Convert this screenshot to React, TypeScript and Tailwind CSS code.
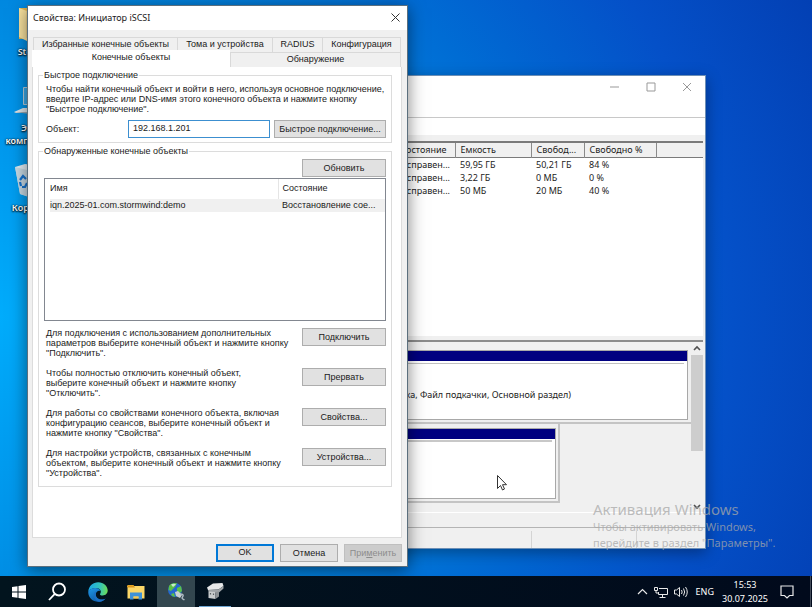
import type { ReactNode } from 'react';

const UI = "font-['Noto_Sans','Open_Sans',sans-serif]";
const DIALOG_UI = "font-['Liberation_Sans',Arial,sans-serif]";

interface Action {
  label: string;
  text: string[];
}

const actions: Action[] = [
  {
    label: 'Подключить',
    text: ['Для подключения с использованием дополнительных', 'параметров выберите конечный объект и нажмите кнопку', '"Подключить".'],
  },
  {
    label: 'Прервать',
    text: ['Чтобы полностью отключить конечный объект,', 'выберите конечный объект и нажмите кнопку', '"Отключить".'],
  },
  {
    label: 'Свойства...',
    text: ['Для работы со свойствами конечного объекта, включая', 'конфигурацию сеансов, выберите конечный объект и', 'нажмите кнопку "Свойства".'],
  },
  {
    label: 'Устройства...',
    text: ['Для настройки устройств, связанных с конечным', 'объектом, выберите конечный объект и нажмите кнопку', '"Устройства".'],
  },
];

const volumes = [
  ['Исправен...', '59,95 ГБ', '50,21 ГБ', '84 %'],
  ['Исправен...', '3,22 ГБ', '0 МБ', '0 %'],
  ['Исправен...', '50 МБ', '20 МБ', '40 %'],
];

function Lines({ lines }: { lines: string[] }) {
  return (
    <p className="leading-[10px] whitespace-nowrap">
      {lines.map((line) => (
        <span key={line} className="block">
          {line}
        </span>
      ))}
    </p>
  );
}

function DialogButton({ children, className = 'w-[84px]' }: { children: ReactNode; className?: string }) {
  return (
    <button type="button" className={`h-[18px] shrink-0 border border-[#adadad] bg-[#e1e1e1] pt-px whitespace-nowrap ${className}`}>
      {children}
    </button>
  );
}

function Tab({ children, className }: { children: ReactNode; className: string }) {
  return (
    <button type="button" role="tab" aria-selected={false} className={`h-[15px] border-t border-r border-[#d9d9d9] whitespace-nowrap ${className}`}>
      {children}
    </button>
  );
}

function DesktopIcon({ label, children }: { label: ReactNode; children: ReactNode }) {
  return (
    <div className="flex w-[62px] flex-col items-center">
      {children}
      <span className="mt-1 text-center text-[9px] leading-[13px] font-semibold text-white [text-shadow:0_1px_2px_#000,0_0_2px_#000]">{label}</span>
    </div>
  );
}

function DesktopIcons() {
  return (
    <div className="absolute top-2 left-0 flex flex-col">
      <div className="h-[76px]">
        <DesktopIcon label="Storm">
          <svg width="28" height="33" viewBox="0 0 28 33">
            <path d="M2 0h9l3 3h12v26l-24 2z" fill="#e3b54d" />
            <path d="M2 0l8 3v30l-8-4z" fill="#fbe4a0" />
            <path d="M9 3h17v27H9z" fill="#f2d38a" />
          </svg>
        </DesktopIcon>
      </div>
      <div className="h-20">
        <DesktopIcon
          label={
            <>
              Этот
              <br />
              компьютер
            </>
          }
        >
          <svg width="34" height="33" viewBox="0 0 34 33">
            <path d="M9.500 3.500h24v17h-24z" fill="#3aa9e8" stroke="#b9cfdc" />
            <path d="M0 28l9-4h22l-6 5H2z" fill="#dfe6ea" />
            <path d="M0 28h25l-1 3z" fill="#9aa9b2" />
          </svg>
        </DesktopIcon>
      </div>
      <DesktopIcon label="Корзина">
        <svg width="32" height="33" viewBox="0 0 32 33">
          <path d="M0 3l10-3 22 3-5 28-13 2-9-3z" fill="#e3eef5" />
          <path d="M0 3l12 3 20-3-4 28-14 2-9-3z" fill="#bfd3df" opacity=".8" />
          <path d="M5 16l3-4 3 3M12 19l-2 4H7M5 18l1 4" fill="none" stroke="#1674cf" strokeWidth="2.200" />
        </svg>
      </DesktopIcon>
    </div>
  );
}

function DiskPane() {
  return (
    <div className="mr-0.5 flex h-[170px] pl-10">
      <div className="min-w-0 flex-1">
        <div className="mt-2 mr-[3px] border border-[#a8a8a8] bg-white">
          <div className="h-[10px] bg-[#000080]" />
          <div className="mr-[3px] h-[3px] border-b border-[#c0c0c0]" />
          <div className="flex h-[55px] items-center justify-end pt-1.5 pr-[116px] leading-3 whitespace-nowrap">
            Исправен (Загрузка, Файл подкачки, Основной раздел)
          </div>
        </div>
        <div className="mt-0.5 h-0.5 bg-[#c4c4c4]" />
        <div className="mr-[131px] border-r-2 border-b-2 border-[#c4c4c4] pt-1 pr-0.5 pb-0.5">
          <div className="border border-[#a8a8a8] bg-white">
            <div className="h-[10px] bg-[#000080]" />
            <div className="mr-[3px] h-[3px] border-b-2 border-[#c8c8c8]" />
            <div className="h-[56px]" />
          </div>
        </div>
      </div>
      <div className="flex w-3 flex-col items-center">
        <svg width="8" height="13" viewBox="0 0 8 13" fill="none" stroke="#505050" strokeWidth="1.600">
          <path d="M1 8l3-3 3 3" />
        </svg>
        <div className="h-24 w-full bg-[#cdcdcd]" />
        <svg className="mt-auto" width="8" height="13" viewBox="0 0 8 13" fill="none" stroke="#505050" strokeWidth="1.600">
          <path d="M1 6l3 3 3-3" />
        </svg>
      </div>
    </div>
  );
}

function DiskManagement() {
  return (
    <section className="absolute top-[75px] left-[180px] w-[526px] border border-[#6d8fb5] bg-[#f0f0f0] text-[9px] text-[#1c1c1c] shadow-[0_4px_14px_rgba(0,0,0,0.35)]">
      <header className="flex h-[41px] justify-end gap-[26px] bg-white pt-[6px] pr-[13px]">
        {['M0 5h9', 'M1 1h8v8H1z', 'M1 1l8 8M9 1l-8 8'].map((d, i) => (
          <button key={d} type="button" aria-label={['Свернуть', 'Развернуть', 'Закрыть'][i]} className="h-[10px] w-[10px]">
            <svg width="10" height="10" viewBox="0 0 10 10" fill="none" stroke="#999">
              <path d={d} />
            </svg>
          </button>
        ))}
      </header>
      <div className="h-[18px] border-t border-[#c8c8c8] bg-white" />
      <div className="mt-1.5 mr-0.5 h-[195px] border-t-2 border-[#7a7a7a] bg-white">
        <table className="w-full table-fixed border-collapse text-left">
          <colgroup>
            <col />
            <col className="w-[76px]" />
            <col className="w-[53px]" />
            <col className="w-[72px]" />
            <col className="w-[47px]" />
          </colgroup>
          <thead>
            <tr className="h-[14px] border-b border-[#7a7a7a] bg-[#f0f0f0] leading-3">
              <th className="border-r border-[#8a8a8a] pr-2 text-right font-normal">Состояние</th>
              <th className="border-r border-[#8a8a8a] pl-[5px] font-normal">Емкость</th>
              <th className="border-r border-[#8a8a8a] pl-[5px] font-normal whitespace-nowrap">Свобод...</th>
              <th className="border-r border-[#8a8a8a] pl-[5px] font-normal whitespace-nowrap">Свободно %</th>
              <th />
            </tr>
          </thead>
          <tbody>
            {volumes.map(([state, size, free, percent]) => (
              <tr key={size} className="leading-[13px]">
                <td className="pr-[5px] text-right">{state}</td>
                <td className="pl-[5px]">{size}</td>
                <td className="pl-[5px]">{free}</td>
                <td className="pl-[5px]">{percent}</td>
                <td />
              </tr>
            ))}
          </tbody>
        </table>
      </div>
      <div className="mr-0.5 h-[6px] border-b-2 border-[#8c8c8c]" />
      <DiskPane />
      <div className="h-4 border-t border-b border-t-white border-b-[#b4b4b4]" />
      <footer className="flex h-5 justify-end pt-[3px]">
        <div className="w-[105px] border-l border-[#d4d4d4]" />
        <div className="w-[69px] border-l border-[#d4d4d4]" />
      </footer>
    </section>
  );
}

function InitiatorDialog() {
  return (
    <section className="absolute top-[5px] left-[27px] w-[381px] border border-[#5b6f7d] bg-[#f0f0f0] text-[9px] text-[#1a1a1a] shadow-[0_3px_16px_rgba(0,0,0,0.5)]">
      <header className="flex h-6 items-center justify-between bg-white pr-[6px] pb-px pl-[5px]">
        <h1>Свойства: Инициатор iSCSI</h1>
        <button type="button" aria-label="Закрыть">
          <svg width="11" height="11" viewBox="0 0 11 11" fill="none" stroke="#333">
            <path d="M1.500 1.500l8 8M9.500 1.500l-8 8" />
          </svg>
        </button>
      </header>

      <div className={`pt-[7px] pr-[5px] pb-1 pl-1 ${DIALOG_UI}`}>
        <div role="tablist" className="px-px">
          <div className="flex border-l border-[#d9d9d9]">
            <Tab className="w-[144px]">Избранные конечные объекты</Tab>
            <Tab className="w-[95px]">Тома и устройства</Tab>
            <Tab className="w-[50px]">RADIUS</Tab>
            <Tab className="flex-1">Конфигурация</Tab>
          </div>
          <div className="flex">
            <button type="button" role="tab" aria-selected className="-mt-0.5 -ml-px h-[17px] w-[198px] bg-white pb-px">
              Конечные объекты
            </button>
            <Tab className="flex-1 border-l">Обнаружение</Tab>
          </div>
        </div>

        <div role="tabpanel" className="border border-t-0 border-[#dcdcdc] bg-white px-[5px] pt-0.5 pb-[50px]">
          <fieldset className="mr-1 min-w-0 border border-[#dcdcdc] px-[7px] pb-1">
            <legend className="-ml-[3px] px-px leading-3">Быстрое подключение</legend>
            <div className="pt-[3px]">
              <Lines
                lines={[
                  'Чтобы найти конечный объект и войти в него, используя основное подключение,',
                  'введите IP-адрес или DNS-имя этого конечного объекта и нажмите кнопку',
                  '"Быстрое подключение".',
                ]}
              />
            </div>
            <div className="mt-[6px] -mr-0.5 flex items-center">
              <label htmlFor="target" className="flex-1 pt-px">
                Объект:
              </label>
              <input id="target" defaultValue="192.168.1.201" className="h-[18px] w-[142px] border border-[#3c8fd0] bg-white px-1 pb-0.5" />
              <DialogButton className="ml-1 w-[112px]">Быстрое подключение...</DialogButton>
            </div>
          </fieldset>

          <fieldset className="mt-0.5 mr-1 min-w-0 border border-[#dcdcdc] px-[5px] pb-2">
            <legend className="-ml-px px-px leading-3">Обнаруженные конечные объекты</legend>
            <div className="flex justify-end pt-0.5">
              <DialogButton>Обновить</DialogButton>
            </div>
            <div className="mt-px h-[143px] border border-[#828790] bg-white pl-[5px]">
              <table className="w-full table-fixed text-left">
                <colgroup>
                  <col />
                  <col className="w-[107px]" />
                </colgroup>
                <thead>
                  <tr className="h-5">
                    <th className="border-r border-[#e5e5e5] font-normal">Имя</th>
                    <th className="pl-1 font-normal">Состояние</th>
                  </tr>
                </thead>
                <tbody>
                  <tr className="h-[13px] bg-[#f0f0f0] leading-[13px]">
                    <td>iqn.2025-01.com.stormwind:demo</td>
                    <td className="pl-1 whitespace-nowrap">Восстановление сое...</td>
                  </tr>
                </tbody>
              </table>
            </div>
            <div className="mt-[7px] flex flex-col gap-[10px] pl-0.5">
              {actions.map((a) => (
                <div key={a.label} className="flex items-start justify-between">
                  <Lines lines={a.text} />
                  <DialogButton>{a.label}</DialogButton>
                </div>
              ))}
            </div>
          </fieldset>
        </div>

        <footer className="mt-[6px] flex justify-end gap-[6px]">
          <button type="button" className="h-[18px] w-[58px] border-2 border-[#0078d7] bg-[#e1e1e1]">
            OK
          </button>
          <DialogButton className="w-[58px]">Отмена</DialogButton>
          <button type="button" disabled className="h-[18px] w-[58px] border border-[#bfbfbf] bg-[#cccccc] pt-px text-[#8c8c8c]">
            При<u>м</u>енить
          </button>
        </footer>
      </div>
    </section>
  );
}

function TaskButton({ label, children, className = '' }: { label: string; children: ReactNode; className?: string }) {
  return (
    <button type="button" aria-label={label} className={`flex h-full w-[38px] items-center justify-center ${className}`}>
      {children}
    </button>
  );
}

function Taskbar() {
  return (
    <nav className="flex h-[31px] shrink-0 items-stretch bg-linear-to-r from-[#02141e] to-[#010a1c] text-[9px] text-white">
      <TaskButton label="Пуск">
        <svg width="14" height="14" viewBox="0 0 14 14" fill="#fff">
          <path d="M0 2l5.500-.8v5.300H0zM6.500 1L14 0v6.500H6.500zM0 7.500h5.500v5.300L0 12zM6.500 7.500H14V14l-7.500-1z" />
        </svg>
      </TaskButton>
      <TaskButton label="Поиск">
        <svg width="19" height="19" viewBox="0 0 19 19" fill="none" stroke="#fff" strokeWidth="1.800">
          <circle cx="11" cy="7.500" r="6" />
          <path d="M6.800 11.800L1 18" />
        </svg>
      </TaskButton>
      <TaskButton label="Microsoft Edge" className="ml-[3px]">
        <svg width="20" height="20" viewBox="0 0 20 20">
          <defs>
            <linearGradient id="edge-top" x1="0" y1=".4" x2="1" y2=".5">
              <stop offset="0" stopColor="#1ba8e8" />
              <stop offset=".6" stopColor="#35c4b8" />
              <stop offset="1" stopColor="#6cdc56" />
            </linearGradient>
            <linearGradient id="edge-body" x1="0" y1="0" x2=".6" y2="1">
              <stop offset="0" stopColor="#1f97e8" />
              <stop offset="1" stopColor="#0c59a4" />
            </linearGradient>
          </defs>
          <path d="M.3 9.500C.8 4 5 .3 10.200.3c5.500 0 9.500 4 9.500 8.300 0 3-2.200 4.900-4.900 4.900-2.300 0-3.300-.9-2.600-1.800 1.700-2.300 0-5.700-4.200-5.700-3.300 0-6.300 1.300-7.700 3.500z" fill="url(#edge-top)" />
          <path d="M.3 9.500c1-2.300 4-3.500 6.900-3.500 3.500 0 5 1.600 5.200 3-1.500-1-4.600.2-4.600 3.600 0 3.200 2.800 5 5.800 5 1.700 0 2.900-.5 4-1.100-1.800 2.300-4.500 3.400-7.500 3.400C4.400 19.900-.2 15.200.3 9.500z" fill="url(#edge-body)" />
          <path d="M7.800 9.500c-1.700 1.300-2.400 3.300-1.700 5.500.8 2.600 3 4.200 5.400 4.800 2.500-.2 4.800-1.500 6.100-3.300-1.100.6-2.300 1.100-4 1.100-3 0-5.800-1.800-5.800-5z" fill="#1c6fc4" />
        </svg>
      </TaskButton>
      <TaskButton label="Проводник">
        <svg width="18" height="16" viewBox="0 0 18 16">
          <path d="M.5 1h6l1.500 2H0z" fill="#e5a523" />
          <path d="M.5 2h17v12.500H.5z" fill="#fbd768" />
          <path d="M.5 2H7l1 1.500H.5z" fill="#d9951b" />
          <path d="M3 15.500V8.500h12v7h-3.500v-3h-5v3z" fill="#3f92d8" />
          <path d="M6.500 12.500h5v2h-5z" fill="#f5c955" />
        </svg>
      </TaskButton>
      <TaskButton label="Инициатор iSCSI" className="ml-0.5 bg-[#33474f]">
        <svg width="20" height="19" viewBox="0 0 20 19">
          <circle cx="9" cy="8" r="7" fill="#2467cf" />
          <path d="M3 4c2-3 6-3.500 8-2.500L9 5 5 9 2.500 8zM11 6l4-2 1 5-3 3-2-3zM5 12l3-1 1 4-3-1z" fill="#5bc048" />
          <path d="M5 2.500c2-1 4-1 5 0L7 5z" fill="#e4f6ef" opacity=".8" />
          <path d="M9 10l3-1 4 4-2 3-4-2z" fill="#c9d0d4" />
          <path d="M14 12c3 0 4 1 2.500 3s1 2 2 3" fill="none" stroke="#aebcc4" strokeWidth="1.400" />
        </svg>
      </TaskButton>
      <TaskButton label="Управление дисками" className="w-[40px]">
        <span className="flex h-full w-8 items-center justify-center border-b border-[#6ea6d2]">
          <svg width="18" height="18" viewBox="0 0 18 18">
            <path d="M1 5.500l6-4 9.500-.5 1 3-5 3.500L2 8z" fill="#e6e8e9" />
            <path d="M2 8l10.500-.5 5-3.500v2.500l-4.500 4H3z" fill="#9fa4a7" />
            <path d="M2.500 9.500l7 .5v7l-7-1z" fill="#c9cccd" />
            <path d="M9.500 10l3.500-.5v5L9.500 17z" fill="#8d9295" />
            <path d="M4.500 11v1.500M7.500 11.500V13" stroke="#5b6063" strokeWidth="1.200" />
          </svg>
        </span>
      </TaskButton>

      <div className="ml-auto flex items-center">
        <svg width="11" height="7" viewBox="0 0 11 7" fill="none" stroke="#e8e8e8" strokeWidth="1.200">
          <path d="M1 6l4.500-4.500L10 6" />
        </svg>
        <svg className="ml-1.5" width="14" height="12" viewBox="0 0 14 12" fill="none" stroke="#e8e8e8">
          <path d="M5 2.500h8.500v6H4.500V6M8.500 8.500v3M5.500 11.500h6M.5 1.500h3v3h-3zM2 4.500v2.500h2" />
        </svg>
        <svg className="ml-1.5" width="15" height="12" viewBox="0 0 15 12" fill="none" stroke="#e8e8e8">
          <path d="M.5 4h2L5.500 1.500v9L2.500 8h-2zM7.500 4q1.300 2 0 4M9.500 2.500q2.300 3.500 0 7M11.500 1q3.500 5 0 10" />
        </svg>
        <span className="ml-[7px]">ENG</span>
        <time className="ml-2 w-[46px] text-center leading-[14px]">
          15:53
          <br />
          30.07.2025
        </time>
        <svg className="ml-3" width="14" height="14" viewBox="0 0 14 14" fill="none" stroke="#e8e8e8" strokeWidth="1.200">
          <path d="M1 1h12v9.500H9.500L7 13l-2.500-2.500H1z" />
        </svg>
        <div className="ml-4 h-[31px] w-0.5 border-l border-[#444c5a]" />
      </div>
    </nav>
  );
}

export default function App() {
  return (
    <div className={`flex h-screen flex-col overflow-hidden ${UI}`}>
      <main className="relative flex-1 overflow-hidden bg-[radial-gradient(110%_130%_at_0%_55%,#00acfc_0%,#009ff2_15%,#0088e0_42%,#006cd4_62%,#0450c8_82%,#0340b4_100%)]">
        <DesktopIcons />
        <DiskManagement />
        <InitiatorDialog />
        <svg className="absolute top-[474px] left-[496px]" width="12" height="18" viewBox="0 0 12 18">
          <path d="M1.500 1.500v13l3-3 2 4.500 2-1-2-4.300h4z" fill="#fff" stroke="#333" />
        </svg>
        <div className="absolute top-[499px] left-[593px] leading-4 whitespace-nowrap text-[#a8a8a8]/75">
          <p className="text-[15px] leading-5">Активация Windows</p>
          <p className="text-[11px]">Чтобы активировать Windows,</p>
          <p className="text-[11px]">перейдите в раздел "Параметры".</p>
        </div>
      </main>
      <Taskbar />
    </div>
  );
}
